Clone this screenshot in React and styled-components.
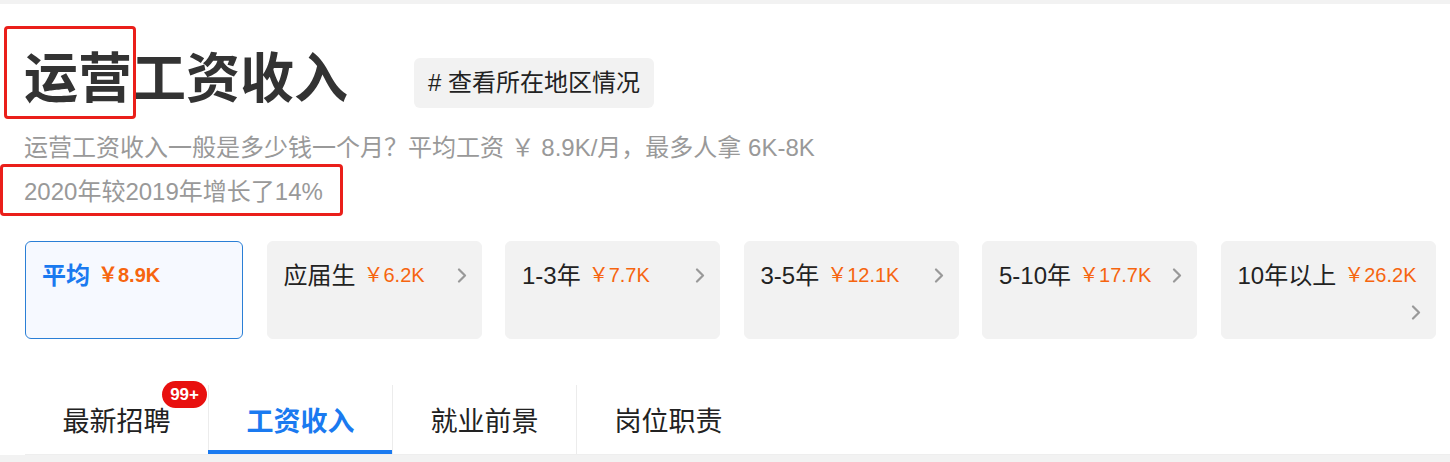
import React from 'react';
import styled, { createGlobalStyle } from 'styled-components';

const GlobalStyle = createGlobalStyle`
  body {
    margin: 0;
    background: #fff;
    font-family: "Liberation Sans", "Noto Sans CJK SC", sans-serif;
    color: #222;
  }
`;

const Page = styled.div`
  position: relative;
  width: 1450px;
  height: 462px;
  overflow: hidden;
  border-top: 4px solid #f2f2f2;
  box-sizing: border-box;
  display: flex;
  flex-direction: column;
`;

const Main = styled.div`
  padding: 39px 0 0 24px;
`;

const HeaderRow = styled.div`
  display: flex;
  align-items: flex-start;
`;

const Title = styled.h1`
  margin: 0;
  font-size: 54px;
  line-height: 64px;
  font-weight: 700;
  color: #333;
  font-family: "Noto Sans CJK SC", sans-serif;
`;

const RegionTag = styled.a`
  margin: 15px 0 0 66px;
  padding: 0 14px;
  height: 50px;
  line-height: 50px;
  border-radius: 6px;
  background: #f2f2f2;
  color: #222;
  font-size: 24px;
  text-decoration: none;
`;

const Summary = styled.div`
  margin-top: 18px;
  font-size: 24px;
  line-height: 44px;
  color: #999;

  p {
    margin: 0;
  }
`;

const CardGrid = styled.div`
  margin: 27px 0 0 1px;
  display: grid;
  grid-template-columns: 218px repeat(5, 215px);
  gap: 23.5px;
`;

const Card = styled.div`
  height: 98px;
  box-sizing: border-box;
  padding: 15px 14px 0 16px;
  border-radius: 6px;
  border: 1px solid ${({ $active }) => ($active ? '#2a7fd6' : '#f2f2f2')};
  background: ${({ $active }) => ($active ? '#f6f9ff' : '#f2f2f2')};
  display: flex;
  flex-wrap: wrap;
  align-content: flex-start;
  align-items: center;
  column-gap: 8px;
  line-height: 37px;
`;

const Label = styled.span`
  font-size: 24px;
  color: ${({ $active }) => ($active ? '#1a7af0' : '#222')};
  font-weight: ${({ $active }) => ($active ? 700 : 400)};
`;

const Price = styled.span`
  font-size: 20px;
  color: #f6650f;
  font-weight: ${({ $active }) => ($active ? 700 : 400)};
`;

const Arrow = styled.span`
  margin-left: auto;
  display: flex;
  align-items: center;
  height: 37px;
`;

const TabBar = styled.div`
  margin: 46px 0 0 25px;
  display: flex;
  height: 69px;
  border-bottom: 1px solid #eee;
`;

const Tab = styled.div`
  position: relative;
  width: 183px;
  display: flex;
  align-items: center;
  justify-content: center;
  font-size: 27px;
  font-family: "Noto Sans CJK SC", sans-serif;
  color: ${({ $active }) => ($active ? '#1a7af0' : '#222')};
  font-weight: ${({ $active }) => ($active ? 700 : 400)};
  border-left: ${({ $first }) => ($first ? 'none' : '1px solid #ececec')};

  &::after {
    content: '';
    display: ${({ $active }) => ($active ? 'block' : 'none')};
    position: absolute;
    left: -1px;
    right: 0;
    bottom: 0;
    height: 4px;
    background: #1a7af0;
  }
`;

const Badge = styled.span`
  position: absolute;
  top: -4px;
  right: 1px;
  height: 27px;
  padding: 0 8px;
  border-radius: 14px;
  background: #e8100f;
  color: #fff;
  font-size: 17px;
  font-weight: 700;
  line-height: 27px;
  font-family: "Liberation Sans", sans-serif;
`;

const Footer = styled.div`
  flex: 1;
  background: #f2f2f2;
`;

const Mark = styled.div`
  position: absolute;
  left: ${({ $x }) => $x}px;
  top: ${({ $y }) => $y}px;
  width: ${({ $w }) => $w}px;
  height: ${({ $h }) => $h}px;
  box-sizing: border-box;
  border: 3px solid #ea1f1a;
  border-radius: 4px;
  pointer-events: none;
`;

const Chevron = () => (
  <svg width="10" height="15" viewBox="0 0 10 15">
    <polyline points="2,1.5 8,7.5 2,13.5" fill="none" stroke="#999" strokeWidth="2.2" strokeLinecap="round" strokeLinejoin="round" />
  </svg>
);

const cards = [
  { label: '平均', price: '￥8.9K', active: true },
  { label: '应届生', price: '￥6.2K' },
  { label: '1-3年', price: '￥7.7K' },
  { label: '3-5年', price: '￥12.1K' },
  { label: '5-10年', price: '￥17.7K' },
  { label: '10年以上', price: '￥26.2K' },
];

const tabs = ['最新招聘', '工资收入', '就业前景', '岗位职责'];

const App = () => (
  <>
    <GlobalStyle />
    <Page>
      <Main>
        <HeaderRow>
          <Title>运营工资收入</Title>
          <RegionTag href="#"># 查看所在地区情况</RegionTag>
        </HeaderRow>
        <Summary>
          <p>运营工资收入一般是多少钱一个月？平均工资 ￥ 8.9K/月，最多人拿 6K-8K</p>
          <p>2020年较2019年增长了14%</p>
        </Summary>
        <CardGrid>
          {cards.map((c) => (
            <Card key={c.label} $active={c.active}>
              <Label $active={c.active}>{c.label}</Label>
              <Price $active={c.active}>{c.price}</Price>
              {!c.active && (
                <Arrow>
                  <Chevron />
                </Arrow>
              )}
            </Card>
          ))}
        </CardGrid>
      </Main>
      <TabBar>
        {tabs.map((t, i) => (
          <Tab key={t} $first={i === 0} $active={i === 1}>
            {t}
            {i === 0 && <Badge>99+</Badge>}
          </Tab>
        ))}
      </TabBar>
      <Footer />

      <Mark $x={4} $y={22} $w={132} $h={93} />
      <Mark $x={0} $y={160} $w={343} $h={52} />
    </Page>
  </>
);

export default App;
